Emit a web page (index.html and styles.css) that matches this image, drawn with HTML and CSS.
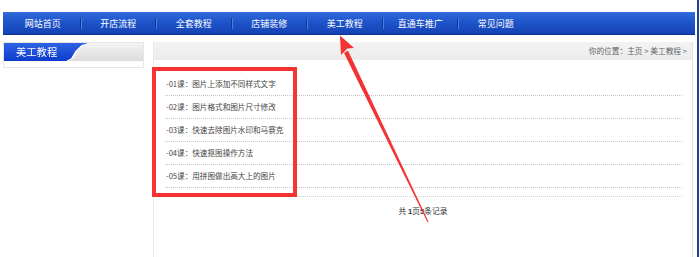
FILE: index.html
```html
<!DOCTYPE html>
<html lang="zh-CN">
<head>
<meta charset="utf-8">
<title>美工教程</title>
<link rel="stylesheet" href="styles.css">
</head>
<body>
<div class="page">
  <div class="site">
    <nav class="nav">
      <a class="nav-item">网站首页</a>
      <a class="nav-item">开店流程</a>
      <a class="nav-item">全套教程</a>
      <a class="nav-item">店铺装修</a>
      <a class="nav-item">美工教程</a>
      <a class="nav-item">直通车推广</a>
      <a class="nav-item last">常见问题</a>
    </nav>
    <div class="content">
      <aside class="side">
        <div class="side-title">
          <div class="tab-wrap"><div class="tab">美工教程</div></div>
        </div>
        <div class="side-body"></div>
      </aside>
      <main class="main">
        <div class="crumb">你的位置：主页 &gt; 美工教程 &gt;</div>
        <ul class="list">
          <li>-01课：图片上添加不同样式文字</li>
          <li>-02课：图片格式和图片尺寸修改</li>
          <li>-03课：快速去除图片水印和马赛克</li>
          <li>-04课：快速抠图操作方法</li>
          <li>-05课：用拼图做出高大上的图片</li>
        </ul>
        <div class="list-end"></div>
        <div class="pager">共 <b>1</b>页<b>5</b>条记录</div>
      </main>
    </div>
  </div>
  <div class="edge"></div>
</div>
<svg class="annot" width="700" height="257" viewBox="0 0 700 257">
  <rect x="154" y="69" width="141" height="126" fill="none" stroke="#f83333" stroke-width="4"/>
  <polygon points="348,50.5 344,53 427.5,222.2 428.5,221.8" fill="#f43232"/>
  <polygon points="340,35.5 354,48 347.3,48.5 341,55" fill="#f43232"/>
</svg>
</body>
</html>
```
FILE: styles.css
```css
html, body {
  margin: 0;
  padding: 0;
  background: #fff;
}
body {
  font-family: "Noto Sans CJK SC", "Noto Sans", sans-serif;
  position: relative;
  width: 700px;
  height: 257px;
  overflow: hidden;
}
.page {
  display: flex;
  height: 257px;
}
.site {
  width: 697px;
  padding: 12px 0 0 3px;
  box-sizing: border-box;
  display: flex;
  flex-direction: column;
}
.edge {
  width: 2px;
  background: #1c3f92;
}
.nav {
  width: 692px;
  height: 23px;
  box-sizing: border-box;
  display: flex;
  padding-left: 2px;
  background: linear-gradient(#2d68da, #1d52c8 50%, #1542b4);
  border-bottom: 1px solid #0e2f8c;
  border-top: 1px solid #3a73de;
}
.nav-item {
  width: 75.5px;
  flex: none;
  color: #fff;
  font-size: 9px;
  line-height: 21px;
  text-align: center;
  position: relative;
}
.nav-item::after {
  content: "";
  position: absolute;
  right: 0;
  top: 5px;
  height: 11px;
  width: 1px;
  background: #0f3796;
  box-shadow: 1px 0 0 #4c7fe0;
}
.nav-item.last::after {
  display: none;
}
.content {
  display: flex;
  margin-top: 7px;
  flex: 1;
}
.side {
  width: 141px;
  flex: none;
  align-self: flex-start;
  border: 1px solid #e6e6e6;
  box-sizing: border-box;
}
.side-title {
  height: 18px;
  display: flex;
  background: linear-gradient(#f4f4f4, #dcdcdc);
}
.tab-wrap {
  filter: drop-shadow(2px 0 0 #ffffff);
}
.tab {
  width: 84px;
  height: 18px;
  box-sizing: border-box;
  padding-left: 12px;
  color: #fff;
  font-size: 10.3px;
  line-height: 18px;
  background: linear-gradient(#2e62e4, #0d3ccc);
  clip-path: polygon(0 0, 100% 0, 92% 12%, 85% 45%, 80% 85%, 74% 100%, 0 100%);
}
.side-body {
  height: 6px;
  background: #fff;
}
.main {
  width: 540px;
  flex: none;
  margin-left: 9px;
  box-sizing: border-box;
  border-left: 1px solid #e8e8e8;
  border-right: 1px solid #e0e0e0;
  display: flex;
  flex-direction: column;
}
.crumb {
  height: 18px;
  line-height: 18px;
  background: linear-gradient(#f3f3f3, #ececec);
  color: #666;
  font-family: "Noto Sans CJK TC", "Noto Sans CJK SC", sans-serif;
  font-size: 7.7px;
  text-align: right;
  padding-right: 5px;
}
.list {
  list-style: none;
  margin: 13px 10px 0 11px;
  padding: 0;
}
.list li {
  height: 22px;
  line-height: 22px;
  border-bottom: 1px dotted #c4c4c4;
  font-family: "Noto Sans CJK TC", "Noto Sans CJK SC", sans-serif;
  font-size: 7.6px;
  color: #444;
  padding-left: 1px;
}
.list-end {
  margin: 8px 10px 0 11px;
  border-top: 1px dotted #d2d2d2;
}
.pager {
  text-align: center;
  font-size: 7.7px;
  color: #333;
  line-height: 14px;
  padding-top: 7px;
}
.pager b {
  font-family: "Liberation Sans", sans-serif;
}
.annot {
  position: absolute;
  left: 0;
  top: 0;
  pointer-events: none;
}
```
